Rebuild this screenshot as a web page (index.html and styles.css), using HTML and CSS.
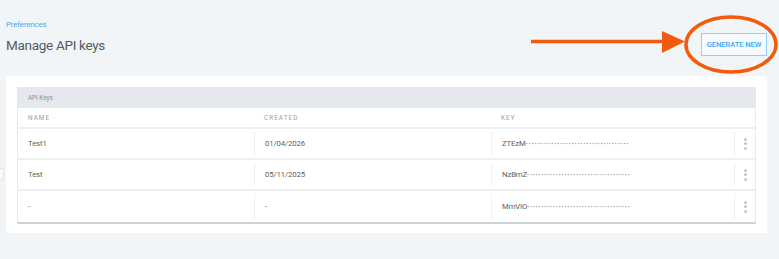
FILE: index.html
```html
<!DOCTYPE html>
<html lang="en">
<head>
<meta charset="utf-8">
<title>Manage API keys</title>
<link rel="stylesheet" href="styles.css">
</head>
<body>
<div class="page">
  <header class="top">
    <div class="titles">
      <a class="crumb" href="#">Preferences</a>
      <h1 class="title">Manage API keys</h1>
    </div>
    <button class="btn" type="button">GENERATE NEW</button>
  </header>

  <section class="card">
    <div class="table">
      <div class="caption">API Keys</div>
      <div class="row head">
        <div class="cell">NAME</div>
        <div class="cell">CREATED</div>
        <div class="cell">KEY</div>
        <div class="cell"></div>
      </div>
      <div class="row">
        <div class="cell">Test1</div>
        <div class="cell sep">01/04/2026</div>
        <div class="cell sep">ZTEzM<span class="mask">••••••••••••••••••••••••••••••••••••</span></div>
        <div class="cell sep kebab"><span></span><span></span><span></span></div>
      </div>
      <div class="row">
        <div class="cell">Test</div>
        <div class="cell sep">05/11/2025</div>
        <div class="cell sep">NzBmZ<span class="mask">••••••••••••••••••••••••••••••••••••</span></div>
        <div class="cell sep kebab"><span></span><span></span><span></span></div>
      </div>
      <div class="row last">
        <div class="cell">-</div>
        <div class="cell sep">-</div>
        <div class="cell sep">MmVlO<span class="mask">••••••••••••••••••••••••••••••••••••</span></div>
        <div class="cell sep kebab"><span></span><span></span><span></span></div>
      </div>
    </div>
  </section>

  <span class="edge-tab"></span>

  <svg class="annot" width="779" height="90" viewBox="0 0 779 90" aria-hidden="true">
    <line x1="531" y1="41.5" x2="664" y2="41.5" stroke="#f25b0d" stroke-width="3.5"/>
    <polygon points="662,31 685,41.5 662,53" fill="#f25b0d"/>
    <ellipse cx="731" cy="44.5" rx="45" ry="27.5" fill="none" stroke="#f25b0d" stroke-width="3.5"/>
  </svg>
</div>
</body>
</html>
```

FILE: styles.css
```css
html, body {
  margin: 0;
  padding: 0;
  background: #f2f5f8;
}

body {
  font-family: Roboto, "Liberation Sans", sans-serif;
  color: #5a5a5a;
}

.page {
  position: relative;
  width: 779px;
  height: 259px;
  box-sizing: border-box;
  padding: 19px 12px 0 6px;
}

.top {
  display: flex;
  justify-content: space-between;
  align-items: flex-end;
}

.titles {
  display: flex;
  flex-direction: column;
}

.crumb {
  font-size: 7.6px;
  line-height: 12px;
  color: #3aa9f2;
  text-decoration: none;
}

.title {
  margin: 4px 0 0;
  font-size: 13.5px;
  letter-spacing: -0.3px;
  line-height: 20px;
  font-weight: 400;
  color: #555a5e;
}

.btn {
  width: 66px;
  height: 23px;
  margin-bottom: -1px;
  padding: 0;
  border: 1px solid #8ed0f6;
  background: #f8fbfe;
  color: #3fa9ef;
  font-family: Roboto, "Liberation Sans", sans-serif;
  font-size: 7.6px;
  font-weight: 500;
  letter-spacing: -0.1px;
}

.card {
  margin-top: 21px;
  background: #ffffff;
  padding: 11px 11px 9px;
}

.table {
  border-left: 1px solid #e7ebef;
  border-right: 1px solid #e7ebef;
  border-bottom: 2px solid #c9d3dc;
}

.caption {
  height: 21px;
  display: flex;
  align-items: center;
  padding-left: 11px;
  background: #e5e9ed;
  font-size: 6.3px;
  color: #8a9098;
  margin: 0 -1px;
}

.row {
  display: grid;
  grid-template-columns: 236px 237px 243px 1fr;
  height: 31px;
  box-sizing: border-box;
  padding: 3px 0;
  border-bottom: 2px solid #edf0f3;
}

.row.last {
  border-bottom: 0;
}

.row.head {
  height: 21px;
  padding: 0;
}

.cell {
  display: flex;
  align-items: center;
  padding-left: 10px;
  font-size: 7.8px;
  letter-spacing: -0.15px;
  color: #5b5f63;
  white-space: nowrap;
  overflow: hidden;
}

.row.head .cell {
  font-size: 6.3px;
  letter-spacing: 1.1px;
  color: #9a9ea3;
}

.sep {
  border-left: 1px solid #eef1f4;
}

.mask {
  font-size: 6px;
  letter-spacing: 0.85px;
  color: #8a8e92;
}

.kebab {
  padding-left: 0;
  flex-direction: column;
  justify-content: center;
  gap: 1.5px;
}

.kebab span {
  width: 3px;
  height: 3px;
  border-radius: 50%;
  background: #c3c7cb;
}

.edge-tab {
  position: absolute;
  left: -2px;
  top: 168px;
  width: 4px;
  height: 10px;
  border: 1px solid #dfe4e9;
  border-radius: 2px;
  background: #f7f9fb;
}

.annot {
  position: absolute;
  left: 0;
  top: 0;
  pointer-events: none;
}
```
